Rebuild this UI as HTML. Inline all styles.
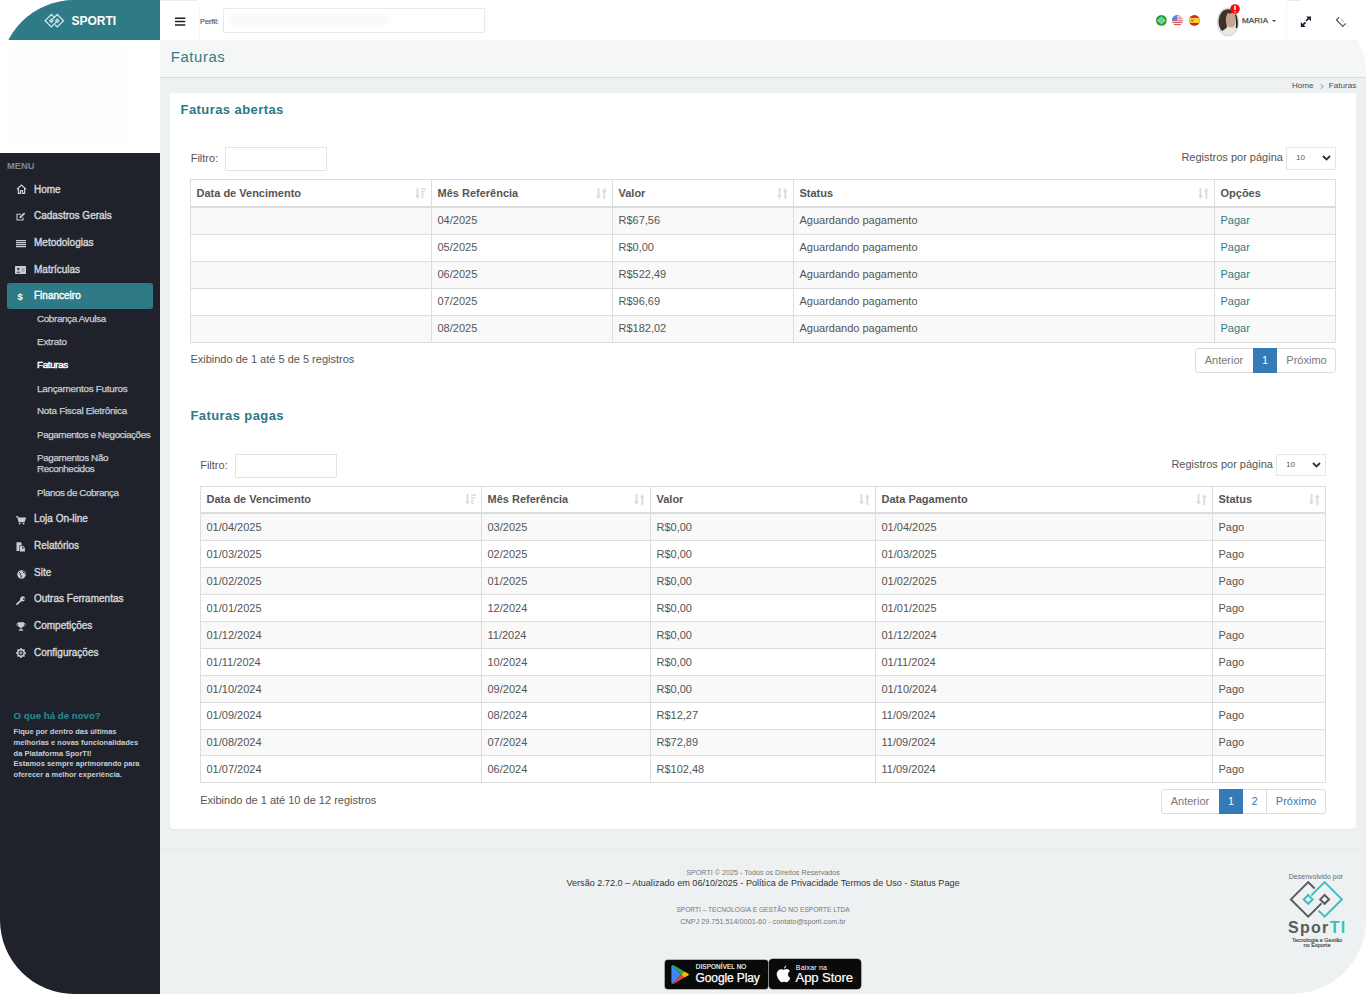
<!DOCTYPE html>
<html><head><meta charset="utf-8"><style>
*{margin:0;padding:0;box-sizing:border-box}
html,body{width:1366px;height:994px;overflow:hidden;background:#fff;font-family:"Liberation Sans",sans-serif}
#page{position:absolute;left:0;top:0;width:1366px;height:994px;border-radius:74px;overflow:hidden;background:#fff}
.t{position:absolute;white-space:nowrap}
.r{position:absolute}
svg{position:absolute;overflow:visible}
</style></head><body><div id="page">
<div class="r" style="left:160px;top:40px;width:1206px;height:954px;background:#eef1f2;"></div>
<div class="r" style="left:0px;top:153px;width:160px;height:841px;background:#1f222a;"></div>
<div class="r" style="left:0px;top:0px;width:160px;height:40px;background:#2e7b87;"></div>
<div class="r" style="left:6px;top:42px;width:125px;height:104px;background:#fefefe;border-radius:12px"></div>
<div class="r" style="left:160px;top:40px;width:1206px;height:37px;background:#f5f6f6;"></div>
<div class="r" style="left:160px;top:77px;width:1206px;height:1px;background:#d8dde3;"></div>
<svg style="left:0px;top:0px" width="160" height="40" viewBox="0 0 160 40"><g transform="translate(41.2,10.1) scale(0.36)" fill="none" stroke="#dbe9eb" stroke-width="3.4"><path d="M34.6 18.5 L28.2 12.1 L10.9 29.4 L28.2 46.7 L41.5 33.4"/><path d="M44.6 25 L49 29.4 L44.6 33.8 L40.2 29.4 Z"/><path d="M38.5 40.6 L44.6 46.7 L61.9 29.4 L44.6 12.1 L31.3 25.4"/><path d="M28.2 25 L32.6 29.4 L28.2 33.8 L23.8 29.4 Z"/></g></svg>
<div class="t" style="left:71.5px;top:14.84px;font-size:12px;line-height:12px;color:#ffffff;font-weight:bold;">SPORTI</div>
<div class="t" style="left:7px;top:161.98px;font-size:9.3px;line-height:9.3px;color:#7f8797;font-weight:bold;">MENU</div>
<div class="r" style="left:7px;top:283px;width:146px;height:26px;background:#2e7b87;border-radius:3px"></div>
<div class="t" style="left:34px;top:185.30px;font-size:10px;line-height:10px;color:#d2d5db;font-weight:normal;-webkit-text-stroke:0.4px #d2d5db">Home</div>
<div class="t" style="left:34px;top:210.90px;font-size:10px;line-height:10px;color:#d2d5db;font-weight:normal;-webkit-text-stroke:0.4px #d2d5db">Cadastros Gerais</div>
<div class="t" style="left:34px;top:238.00px;font-size:10px;line-height:10px;color:#d2d5db;font-weight:normal;-webkit-text-stroke:0.4px #d2d5db">Metodologias</div>
<div class="t" style="left:34px;top:265.00px;font-size:10px;line-height:10px;color:#d2d5db;font-weight:normal;-webkit-text-stroke:0.4px #d2d5db">Matrículas</div>
<div class="t" style="left:34px;top:291.00px;font-size:10px;line-height:10px;color:#ffffff;font-weight:normal;-webkit-text-stroke:0.4px #ffffff">Financeiro</div>
<div class="t" style="left:37px;top:314.48px;font-size:9.9px;line-height:9.9px;color:#c8ccd3;font-weight:normal;letter-spacing:-0.38px;-webkit-text-stroke:0.25px #c8ccd3">Cobrança Avulsa</div>
<div class="t" style="left:37px;top:337.18px;font-size:9.9px;line-height:9.9px;color:#c8ccd3;font-weight:normal;letter-spacing:-0.21px;-webkit-text-stroke:0.25px #c8ccd3">Extrato</div>
<div class="t" style="left:37px;top:360.08px;font-size:9.9px;line-height:9.9px;color:#ffffff;font-weight:normal;letter-spacing:-0.37px;-webkit-text-stroke:0.45px #fff">Faturas</div>
<div class="t" style="left:37px;top:383.58px;font-size:9.9px;line-height:9.9px;color:#c8ccd3;font-weight:normal;letter-spacing:-0.265px;-webkit-text-stroke:0.25px #c8ccd3">Lançamentos Futuros</div>
<div class="t" style="left:37px;top:406.48px;font-size:9.9px;line-height:9.9px;color:#c8ccd3;font-weight:normal;letter-spacing:-0.28px;-webkit-text-stroke:0.25px #c8ccd3">Nota Fiscal Eletrônica</div>
<div class="t" style="left:37px;top:429.68px;font-size:9.9px;line-height:9.9px;color:#c8ccd3;font-weight:normal;letter-spacing:-0.43px;-webkit-text-stroke:0.25px #c8ccd3">Pagamentos e Negociações</div>
<div class="t" style="left:37px;top:452.68px;font-size:9.9px;line-height:9.9px;color:#c8ccd3;font-weight:normal;letter-spacing:-0.37px;-webkit-text-stroke:0.25px #c8ccd3">Pagamentos Não</div>
<div class="t" style="left:37px;top:464.48px;font-size:9.9px;line-height:9.9px;color:#c8ccd3;font-weight:normal;letter-spacing:-0.45px;-webkit-text-stroke:0.25px #c8ccd3">Reconhecidos</div>
<div class="t" style="left:37px;top:487.68px;font-size:9.9px;line-height:9.9px;color:#c8ccd3;font-weight:normal;letter-spacing:-0.44px;-webkit-text-stroke:0.25px #c8ccd3">Planos de Cobrança</div>
<div class="t" style="left:34px;top:513.90px;font-size:10px;line-height:10px;color:#d2d5db;font-weight:normal;-webkit-text-stroke:0.4px #d2d5db">Loja On-line</div>
<div class="t" style="left:34px;top:540.80px;font-size:10px;line-height:10px;color:#d2d5db;font-weight:normal;-webkit-text-stroke:0.4px #d2d5db">Relatórios</div>
<div class="t" style="left:34px;top:567.90px;font-size:10px;line-height:10px;color:#d2d5db;font-weight:normal;-webkit-text-stroke:0.4px #d2d5db">Site</div>
<div class="t" style="left:34px;top:594.40px;font-size:10px;line-height:10px;color:#d2d5db;font-weight:normal;-webkit-text-stroke:0.4px #d2d5db">Outras Ferramentas</div>
<div class="t" style="left:34px;top:621.00px;font-size:10px;line-height:10px;color:#d2d5db;font-weight:normal;-webkit-text-stroke:0.4px #d2d5db">Competições</div>
<div class="t" style="left:34px;top:648.00px;font-size:10px;line-height:10px;color:#d2d5db;font-weight:normal;-webkit-text-stroke:0.4px #d2d5db">Configurações</div>
<svg style="left:15.5px;top:184px" width="11" height="10" viewBox="0 0 11 10"><path d="M1 5.2 L5.5 1 L10 5.2 M2.4 4 V9.4 H4.5 V6.6 H6.5 V9.4 H8.6 V4" fill="none" stroke="#c9cdd5" stroke-width="1.2"/></svg>
<svg style="left:15.5px;top:212px" width="10" height="9" viewBox="0 0 10 9"><path d="M5 2.3 H1 V8 H7 V5.5" fill="none" stroke="#c9cdd5" stroke-width="1.1"/><path d="M3.3 6.3 L3.8 4.6 L8 0.6 L9.2 1.8 L5 6 Z" fill="#c9cdd5"/></svg>
<svg style="left:15.5px;top:240px" width="10" height="8" viewBox="0 0 10 8"><path d="M0 0.6 H10 M0 2.6 H10 M0 4.6 H10 M0 6.6 H10" stroke="#c9cdd5" stroke-width="1.1"/></svg>
<svg style="left:15px;top:266px" width="11" height="8" viewBox="0 0 11 8"><rect x="0" y="0" width="11" height="8" rx="0.8" fill="#c9cdd5"/><circle cx="3.3" cy="3" r="1.2" fill="#3a3d45"/><path d="M1.4 6.8 Q3.3 4.3 5.2 6.8 Z" fill="#3a3d45"/><path d="M6.5 3 H9.5 M6.5 5 H9.5" stroke="#7b7f88" stroke-width="0.9"/></svg>
<div class="t" style="left:17.5px;top:292.42px;font-size:9.5px;line-height:9.5px;color:#ffffff;font-weight:bold;">$</div>
<svg style="left:16px;top:516px" width="10" height="9" viewBox="0 0 10 9"><path d="M0 0.8 H1.8 L3 5.6 H8.2 L9.4 2 H2.4" fill="#c9cdd5" stroke="#c9cdd5" stroke-width="1.1"/><circle cx="3.6" cy="7.6" r="0.9" fill="#c9cdd5"/><circle cx="7.6" cy="7.6" r="0.9" fill="#c9cdd5"/></svg>
<svg style="left:16px;top:542px" width="10" height="10" viewBox="0 0 10 10"><path d="M0.5 0.3 H4.6 L5.6 1.3 V3.3 H3.3 V9 H0.5 Z" fill="#c9cdd5"/><path d="M3.8 3.8 H7 L9 5.8 V9.6 H3.8 Z" fill="#c9cdd5"/><path d="M6.6 4.2 V6.2 H8.6" fill="none" stroke="#1f222a" stroke-width="0.8"/></svg>
<svg style="left:16.5px;top:570px" width="9" height="9" viewBox="0 0 9 9"><circle cx="4.5" cy="4.5" r="4.2" fill="#c9cdd5"/><path d="M2.3 2.2 Q3.8 3.2 3.3 4.6 Q4.6 5.4 4.2 7.8 M5.8 1.2 Q6.3 3 8 3.5" fill="none" stroke="#1f222a" stroke-width="1"/></svg>
<svg style="left:16px;top:596px" width="10" height="9" viewBox="0 0 10 9"><path d="M1 8.2 L5.2 4.2" stroke="#c9cdd5" stroke-width="1.8" stroke-linecap="round"/><path d="M4.7 4.6 A2.6 2.6 0 1 1 9.2 2.2 L7.3 2.2 L6.8 2.9 L7.3 4.1 L9.2 3.3 A2.6 2.6 0 0 1 4.7 4.6 Z" fill="#c9cdd5"/></svg>
<svg style="left:16px;top:622px" width="10" height="9" viewBox="0 0 10 9"><path d="M2 0.3 H8 V2.6 Q8 5.5 5 5.8 Q2 5.5 2 2.6 Z" fill="#c9cdd5"/><path d="M2 1.3 Q0.5 1.3 0.8 2.7 Q1.2 3.9 2.4 4.1 M8 1.3 Q9.5 1.3 9.2 2.7 Q8.8 3.9 7.6 4.1" fill="none" stroke="#c9cdd5" stroke-width="0.8"/><path d="M4.5 5.5 V7.5 H2.8 V8.7 H7.2 V7.5 H5.5 V5.5 Z" fill="#c9cdd5"/></svg>
<svg style="left:16px;top:647.5px" width="10" height="10" viewBox="0 0 10 10"><g fill="none" stroke="#c9cdd5"><circle cx="5" cy="5" r="3.2" stroke-width="1.4"/><circle cx="5" cy="5" r="1.1" stroke-width="0.9"/></g><g stroke="#c9cdd5" stroke-width="1.5"><path d="M5 0 V1.8 M5 8.2 V10 M0 5 H1.8 M8.2 5 H10 M1.5 1.5 L2.7 2.7 M7.3 7.3 L8.5 8.5 M1.5 8.5 L2.7 7.3 M7.3 2.7 L8.5 1.5"/></g></svg>
<div class="t" style="left:13.6px;top:711.45px;font-size:9.7px;line-height:9.7px;color:#2e8b96;font-weight:bold;">O que há de novo?</div>
<div class="t" style="left:13.6px;top:727.77px;font-size:7.5px;line-height:7.5px;color:#c9cdd4;font-weight:bold;">Fique por dentro das últimas</div>
<div class="t" style="left:13.6px;top:738.77px;font-size:7.5px;line-height:7.5px;color:#c9cdd4;font-weight:bold;">melhorias e novas funcionalidades</div>
<div class="t" style="left:13.6px;top:749.57px;font-size:7.5px;line-height:7.5px;color:#c9cdd4;font-weight:bold;">da Plataforma SporTI!</div>
<div class="t" style="left:13.6px;top:759.67px;font-size:7.5px;line-height:7.5px;color:#c9cdd4;font-weight:bold;">Estamos sempre aprimorando para</div>
<div class="t" style="left:13.6px;top:770.67px;font-size:7.5px;line-height:7.5px;color:#c9cdd4;font-weight:bold;">oferecer a melhor experiência.</div>
<svg style="left:174.8px;top:17px" width="11" height="9" viewBox="0 0 11 9"><path d="M0 1.2 H10.3 M0 4.6 H10.3 M0 8 H10.3" stroke="#1c1f29" stroke-width="1.5"/></svg>
<div class="t" style="left:200px;top:17.86px;font-size:7.4px;line-height:7.4px;color:#555;font-weight:normal;-webkit-text-stroke:0.2px #555">Perfil:</div>
<div class="r" style="left:199px;top:2px;width:1px;height:38px;background:#f6f6f6;"></div>
<div class="r" style="left:160px;top:0px;width:38px;height:1px;background:#ececec;border-radius:0 2px 0 0"></div>
<div class="r" style="left:223px;top:8px;width:262px;height:25px;background:#fff;border:1px solid #e6e9ed;border-radius:1px"></div>
<div class="r" style="left:228px;top:14px;width:160px;height:11px;background:rgba(238,240,242,0.45);filter:blur(2px);border-radius:5px"></div>
<svg style="left:1156px;top:15px" width="11" height="11" viewBox="0 0 11 11"><circle cx="5.4" cy="5.4" r="5.4" fill="#2a9a3c"/><path d="M5.4 1.6 L9.8 5.4 L5.4 9.2 L1 5.4 Z" fill="#e6d72e"/><circle cx="5.4" cy="5.4" r="2.4" fill="#3bd2f0"/></svg>
<svg style="left:1172px;top:15px" width="11" height="11" viewBox="0 0 11 11"><defs><clipPath id="cu"><circle cx="5.4" cy="5.4" r="5.4"/></clipPath></defs><g clip-path="url(#cu)"><rect width="11" height="11" fill="#f3eeee"/><path d="M0 0.8 H11 M0 3 H11 M0 5.2 H11 M0 7.4 H11 M0 9.6 H11" stroke="#df5a66" stroke-width="1.1"/><rect width="5" height="5.6" fill="#5c85cf"/></g></svg>
<svg style="left:1188.5px;top:15px" width="11" height="11" viewBox="0 0 11 11"><defs><clipPath id="ce"><circle cx="5.4" cy="5.4" r="5.4"/></clipPath></defs><g clip-path="url(#ce)"><rect width="11" height="11" fill="#e0192e"/><rect y="2.9" width="11" height="5" fill="#f5d52a"/><circle cx="3.3" cy="5.4" r="1.2" fill="#e06040"/></g></svg>
<svg style="left:1217px;top:7.8px" width="22" height="28" viewBox="0 0 22 28"><defs><clipPath id="av"><ellipse cx="11" cy="14" rx="10.8" ry="14"/></clipPath></defs><g clip-path="url(#av)"><rect width="22" height="28" fill="#e6e1d7"/><path d="M2.5 8 Q5 1.5 11 1.2 Q15 1.2 17 3 Q12 3.5 10 8 Q9 14 10 19 Q8 23 5 23 Q1.5 19 1.5 13 Z" fill="#40302a"/><ellipse cx="14" cy="11.5" rx="5.2" ry="8" fill="#c6a491"/><path d="M11 2 Q16 1.5 19.5 5 Q15 4 12 6 Z" fill="#3b2b25"/><path d="M3 28 Q5 20.5 12 19.5 Q18 20 21 24 L21 28 Z" fill="#ece9e1"/><path d="M19 6 Q21.5 12 20.5 20 L18.8 20 Q19.8 12 18 7 Z" fill="#1e1917"/></g><ellipse cx="11" cy="14" rx="10.8" ry="14" fill="none" stroke="#9ed6d6" stroke-width="0.6"/></svg>
<svg style="left:1230.3px;top:3.8px" width="10" height="10" viewBox="0 0 10 10"><circle cx="5" cy="5" r="4.8" fill="#fa0a0f"/><rect x="4.2" y="1.8" width="1.6" height="4.2" rx="0.5" fill="#fff"/><rect x="4.3" y="7" width="1.4" height="1.3" fill="#f3d0d0"/></svg>
<div class="t" style="left:1242px;top:17.48px;font-size:8.1px;line-height:8.1px;color:#4a4a4a;font-weight:normal;letter-spacing:0.1px;-webkit-text-stroke:0.25px #4a4a4a">MARIA</div>
<svg style="left:1272px;top:20px" width="4" height="2" viewBox="0 0 4 2"><path d="M0 0 H4 L2 2 Z" fill="#444"/></svg>
<div class="r" style="left:1286px;top:0px;width:1px;height:40px;background:#f8f8f8;"></div>
<div class="r" style="left:1325px;top:6px;width:1px;height:34px;background:#fbfbfb;"></div>
<div class="r" style="left:1287px;top:0px;width:14px;height:1px;background:#e9e9e9;"></div>
<svg style="left:1295px;top:10px" width="60" height="22" viewBox="0 0 60 22"><g stroke="#1c2130" stroke-width="1.7"><path d="M11 11 L13.6 8.4"/><path d="M10.5 12.3 L7.9 14.9"/></g><path d="M16 6.4 V11.2 L11.2 6.4 Z" fill="#1c2130"/><path d="M5.8 12 V16.9 H10.7 Z" fill="#1c2130"/><path d="M44 7.3 L41.5 10 L47.8 16.4 L50.6 13.4" fill="none" stroke="#5a5a5a" stroke-width="1.3"/><path d="M46 9 L48.6 11.8" stroke="#4fc6cc" stroke-width="1.1"/><path d="M51 14 L53.8 16.8" stroke="#8fdde0" stroke-width="0.8"/></svg>
<div class="t" style="left:170.7px;top:50.13px;font-size:14.9px;line-height:14.9px;color:#2f7e8a;font-weight:normal;letter-spacing:0.6px">Faturas</div>
<div class="t" style="right:52.40000000000009px;top:82.18px;font-size:8.1px;line-height:8.1px;color:#4a4a55;font-weight:normal;">Home</div>
<svg style="left:1319.5px;top:83.5px" width="4" height="5" viewBox="0 0 4 5"><path d="M0.5 0.3 L3.3 2.5 L0.5 4.7" fill="none" stroke="#777" stroke-width="0.8"/></svg>
<div class="t" style="right:9.799999999999955px;top:82.18px;font-size:8.1px;line-height:8.1px;color:#4a4a55;font-weight:normal;">Faturas</div>
<div class="r" style="left:170px;top:93px;width:1186px;height:736px;background:#fff;border-radius:3px;box-shadow:0 1px 1px rgba(0,0,0,0.04)"></div>
<div class="t" style="left:180.6px;top:102.71px;font-size:13px;line-height:13px;color:#2b7986;font-weight:bold;letter-spacing:0.42px">Faturas abertas</div>
<div class="t" style="left:190.7px;top:152.57px;font-size:11px;line-height:11px;color:#555;font-weight:normal;">Filtro:</div>
<div class="r" style="left:225px;top:147px;width:102px;height:24px;background:#fff;border:1px solid #dfe4ea"></div>
<div class="t" style="right:83.09999999999991px;top:152.37px;font-size:11px;line-height:11px;color:#555;font-weight:normal;">Registros por página</div>
<div class="r" style="left:1286px;top:147px;width:50px;height:23px;background:#fff;border:1px solid #e3e7ec"></div>
<div class="t" style="left:1296px;top:154.36px;font-size:8px;line-height:8px;color:#555;font-weight:normal;">10</div>
<svg style="left:1322px;top:155px" width="9" height="6" viewBox="0 0 9 6"><path d="M1 1 L4.5 4.5 L8 1" fill="none" stroke="#333" stroke-width="1.8"/></svg>
<div class="r" style="left:191px;top:208px;width:1144px;height:26px;background:#f9f9f9;"></div>
<div class="r" style="left:191px;top:262px;width:1144px;height:26px;background:#f9f9f9;"></div>
<div class="r" style="left:191px;top:316px;width:1144px;height:26px;background:#f9f9f9;"></div>
<div class="r" style="left:190px;top:179px;width:1146px;height:1px;background:#dddddd;"></div>
<div class="r" style="left:190px;top:206px;width:1146px;height:2px;background:#dddddd;"></div>
<div class="r" style="left:190px;top:234px;width:1146px;height:1px;background:#dddddd;"></div>
<div class="r" style="left:190px;top:261px;width:1146px;height:1px;background:#dddddd;"></div>
<div class="r" style="left:190px;top:288px;width:1146px;height:1px;background:#dddddd;"></div>
<div class="r" style="left:190px;top:315px;width:1146px;height:1px;background:#dddddd;"></div>
<div class="r" style="left:190px;top:342px;width:1146px;height:1px;background:#dddddd;"></div>
<div class="r" style="left:190px;top:179px;width:1px;height:164px;background:#dddddd;"></div>
<div class="r" style="left:431px;top:179px;width:1px;height:164px;background:#dddddd;"></div>
<div class="r" style="left:612px;top:179px;width:1px;height:164px;background:#dddddd;"></div>
<div class="r" style="left:793px;top:179px;width:1px;height:164px;background:#dddddd;"></div>
<div class="r" style="left:1214px;top:179px;width:1px;height:164px;background:#dddddd;"></div>
<div class="r" style="left:1335px;top:179px;width:1px;height:164px;background:#dddddd;"></div>
<div class="t" style="left:196.5px;top:187.87px;font-size:11px;line-height:11px;color:#555;font-weight:bold;">Data de Vencimento</div>
<svg style="left:415px;top:188px" width="11" height="11" viewBox="0 0 11 11"><path d="M2.5 0 V8" stroke="#dcdcdc" stroke-width="2"/><path d="M0 7.3 H5 L2.5 11 Z" fill="#dcdcdc"/><path d="M6 1 H11 M6 3.8 H10 M6 6.5 H9 M6 9 H8.5" stroke="#dcdcdc" stroke-width="1.6"/></svg>
<div class="t" style="left:437.5px;top:187.87px;font-size:11px;line-height:11px;color:#555;font-weight:bold;">Mês Referência</div>
<svg style="left:596px;top:188px" width="11" height="11" viewBox="0 0 11 11"><path d="M2.5 0 V8" stroke="#dcdcdc" stroke-width="2"/><path d="M0 7.3 H5 L2.5 11 Z" fill="#dcdcdc"/><path d="M8.3 3 V11" stroke="#dcdcdc" stroke-width="2"/><path d="M5.8 3.7 H10.8 L8.3 0 Z" fill="#dcdcdc"/></svg>
<div class="t" style="left:618.5px;top:187.87px;font-size:11px;line-height:11px;color:#555;font-weight:bold;">Valor</div>
<svg style="left:777px;top:188px" width="11" height="11" viewBox="0 0 11 11"><path d="M2.5 0 V8" stroke="#dcdcdc" stroke-width="2"/><path d="M0 7.3 H5 L2.5 11 Z" fill="#dcdcdc"/><path d="M8.3 3 V11" stroke="#dcdcdc" stroke-width="2"/><path d="M5.8 3.7 H10.8 L8.3 0 Z" fill="#dcdcdc"/></svg>
<div class="t" style="left:799.5px;top:187.87px;font-size:11px;line-height:11px;color:#555;font-weight:bold;">Status</div>
<svg style="left:1198px;top:188px" width="11" height="11" viewBox="0 0 11 11"><path d="M2.5 0 V8" stroke="#dcdcdc" stroke-width="2"/><path d="M0 7.3 H5 L2.5 11 Z" fill="#dcdcdc"/><path d="M8.3 3 V11" stroke="#dcdcdc" stroke-width="2"/><path d="M5.8 3.7 H10.8 L8.3 0 Z" fill="#dcdcdc"/></svg>
<div class="t" style="left:1220.5px;top:187.87px;font-size:11px;line-height:11px;color:#555;font-weight:bold;">Opções</div>
<div class="t" style="left:437.5px;top:215.07px;font-size:11px;line-height:11px;color:#555;font-weight:normal;">04/2025</div>
<div class="t" style="left:618.5px;top:215.07px;font-size:11px;line-height:11px;color:#555;font-weight:normal;">R$67,56</div>
<div class="t" style="left:799.5px;top:215.07px;font-size:11px;line-height:11px;color:#555;font-weight:normal;">Aguardando pagamento</div>
<div class="t" style="left:1220.5px;top:215.07px;font-size:11px;line-height:11px;color:#2e7b87;font-weight:normal;">Pagar</div>
<div class="t" style="left:437.5px;top:242.07px;font-size:11px;line-height:11px;color:#555;font-weight:normal;">05/2025</div>
<div class="t" style="left:618.5px;top:242.07px;font-size:11px;line-height:11px;color:#555;font-weight:normal;">R$0,00</div>
<div class="t" style="left:799.5px;top:242.07px;font-size:11px;line-height:11px;color:#555;font-weight:normal;">Aguardando pagamento</div>
<div class="t" style="left:1220.5px;top:242.07px;font-size:11px;line-height:11px;color:#2e7b87;font-weight:normal;">Pagar</div>
<div class="t" style="left:437.5px;top:269.07px;font-size:11px;line-height:11px;color:#555;font-weight:normal;">06/2025</div>
<div class="t" style="left:618.5px;top:269.07px;font-size:11px;line-height:11px;color:#555;font-weight:normal;">R$522,49</div>
<div class="t" style="left:799.5px;top:269.07px;font-size:11px;line-height:11px;color:#555;font-weight:normal;">Aguardando pagamento</div>
<div class="t" style="left:1220.5px;top:269.07px;font-size:11px;line-height:11px;color:#2e7b87;font-weight:normal;">Pagar</div>
<div class="t" style="left:437.5px;top:296.07px;font-size:11px;line-height:11px;color:#555;font-weight:normal;">07/2025</div>
<div class="t" style="left:618.5px;top:296.07px;font-size:11px;line-height:11px;color:#555;font-weight:normal;">R$96,69</div>
<div class="t" style="left:799.5px;top:296.07px;font-size:11px;line-height:11px;color:#555;font-weight:normal;">Aguardando pagamento</div>
<div class="t" style="left:1220.5px;top:296.07px;font-size:11px;line-height:11px;color:#2e7b87;font-weight:normal;">Pagar</div>
<div class="t" style="left:437.5px;top:323.07px;font-size:11px;line-height:11px;color:#555;font-weight:normal;">08/2025</div>
<div class="t" style="left:618.5px;top:323.07px;font-size:11px;line-height:11px;color:#555;font-weight:normal;">R$182,02</div>
<div class="t" style="left:799.5px;top:323.07px;font-size:11px;line-height:11px;color:#555;font-weight:normal;">Aguardando pagamento</div>
<div class="t" style="left:1220.5px;top:323.07px;font-size:11px;line-height:11px;color:#2e7b87;font-weight:normal;">Pagar</div>
<div class="t" style="left:190.4px;top:354.07px;font-size:11px;line-height:11px;color:#555;font-weight:normal;">Exibindo de 1 até 5 de 5 registros</div>
<div class="r" style="left:1195px;top:348px;width:141px;height:25px;border:1px solid #dddddd;border-radius:3px;background:#fff"></div>
<div class="t" style="left:1195px;top:348px;width:58px;height:25px;line-height:25px;text-align:center;font-size:11px;color:#777">Anterior</div>
<div class="r" style="left:1253px;top:348px;width:24px;height:25px;background:#337ab7;"></div>
<div class="t" style="left:1253px;top:348px;width:24px;height:25px;line-height:25px;text-align:center;font-size:11px;color:#fff">1</div>
<div class="t" style="left:1277px;top:348px;width:59px;height:25px;line-height:25px;text-align:center;font-size:11px;color:#777">Próximo</div>
<div class="t" style="left:190.4px;top:408.71px;font-size:13px;line-height:13px;color:#2b7986;font-weight:bold;letter-spacing:0.42px">Faturas pagas</div>
<div class="t" style="left:200.2px;top:460.07px;font-size:11px;line-height:11px;color:#555;font-weight:normal;">Filtro:</div>
<div class="r" style="left:235px;top:454px;width:102px;height:24px;background:#fff;border:1px solid #dfe4ea"></div>
<div class="t" style="right:93.09999999999991px;top:459.37px;font-size:11px;line-height:11px;color:#555;font-weight:normal;">Registros por página</div>
<div class="r" style="left:1276px;top:454px;width:50px;height:22px;background:#fff;border:1px solid #e3e7ec"></div>
<div class="t" style="left:1286px;top:461.36px;font-size:8px;line-height:8px;color:#555;font-weight:normal;">10</div>
<svg style="left:1312px;top:462px" width="9" height="6" viewBox="0 0 9 6"><path d="M1 1 L4.5 4.5 L8 1" fill="none" stroke="#333" stroke-width="1.8"/></svg>
<div class="r" style="left:201px;top:514px;width:1124px;height:26px;background:#f9f9f9;"></div>
<div class="r" style="left:201px;top:568px;width:1124px;height:26px;background:#f9f9f9;"></div>
<div class="r" style="left:201px;top:622px;width:1124px;height:26px;background:#f9f9f9;"></div>
<div class="r" style="left:201px;top:676px;width:1124px;height:26px;background:#f9f9f9;"></div>
<div class="r" style="left:201px;top:730px;width:1124px;height:25px;background:#f9f9f9;"></div>
<div class="r" style="left:200px;top:486px;width:1126px;height:1px;background:#dddddd;"></div>
<div class="r" style="left:200px;top:512px;width:1126px;height:2px;background:#dddddd;"></div>
<div class="r" style="left:200px;top:540px;width:1126px;height:1px;background:#dddddd;"></div>
<div class="r" style="left:200px;top:567px;width:1126px;height:1px;background:#dddddd;"></div>
<div class="r" style="left:200px;top:594px;width:1126px;height:1px;background:#dddddd;"></div>
<div class="r" style="left:200px;top:621px;width:1126px;height:1px;background:#dddddd;"></div>
<div class="r" style="left:200px;top:648px;width:1126px;height:1px;background:#dddddd;"></div>
<div class="r" style="left:200px;top:675px;width:1126px;height:1px;background:#dddddd;"></div>
<div class="r" style="left:200px;top:702px;width:1126px;height:1px;background:#dddddd;"></div>
<div class="r" style="left:200px;top:729px;width:1126px;height:1px;background:#dddddd;"></div>
<div class="r" style="left:200px;top:755px;width:1126px;height:1px;background:#dddddd;"></div>
<div class="r" style="left:200px;top:782px;width:1126px;height:1px;background:#dddddd;"></div>
<div class="r" style="left:200px;top:486px;width:1px;height:297px;background:#dddddd;"></div>
<div class="r" style="left:481px;top:486px;width:1px;height:297px;background:#dddddd;"></div>
<div class="r" style="left:650px;top:486px;width:1px;height:297px;background:#dddddd;"></div>
<div class="r" style="left:875px;top:486px;width:1px;height:297px;background:#dddddd;"></div>
<div class="r" style="left:1212px;top:486px;width:1px;height:297px;background:#dddddd;"></div>
<div class="r" style="left:1325px;top:486px;width:1px;height:297px;background:#dddddd;"></div>
<div class="t" style="left:206.5px;top:493.87px;font-size:11px;line-height:11px;color:#555;font-weight:bold;">Data de Vencimento</div>
<svg style="left:465px;top:494px" width="11" height="11" viewBox="0 0 11 11"><path d="M2.5 0 V8" stroke="#dcdcdc" stroke-width="2"/><path d="M0 7.3 H5 L2.5 11 Z" fill="#dcdcdc"/><path d="M6 1 H11 M6 3.8 H10 M6 6.5 H9 M6 9 H8.5" stroke="#dcdcdc" stroke-width="1.6"/></svg>
<div class="t" style="left:487.5px;top:493.87px;font-size:11px;line-height:11px;color:#555;font-weight:bold;">Mês Referência</div>
<svg style="left:634px;top:494px" width="11" height="11" viewBox="0 0 11 11"><path d="M2.5 0 V8" stroke="#dcdcdc" stroke-width="2"/><path d="M0 7.3 H5 L2.5 11 Z" fill="#dcdcdc"/><path d="M8.3 3 V11" stroke="#dcdcdc" stroke-width="2"/><path d="M5.8 3.7 H10.8 L8.3 0 Z" fill="#dcdcdc"/></svg>
<div class="t" style="left:656.5px;top:493.87px;font-size:11px;line-height:11px;color:#555;font-weight:bold;">Valor</div>
<svg style="left:859px;top:494px" width="11" height="11" viewBox="0 0 11 11"><path d="M2.5 0 V8" stroke="#dcdcdc" stroke-width="2"/><path d="M0 7.3 H5 L2.5 11 Z" fill="#dcdcdc"/><path d="M8.3 3 V11" stroke="#dcdcdc" stroke-width="2"/><path d="M5.8 3.7 H10.8 L8.3 0 Z" fill="#dcdcdc"/></svg>
<div class="t" style="left:881.5px;top:493.87px;font-size:11px;line-height:11px;color:#555;font-weight:bold;">Data Pagamento</div>
<svg style="left:1196px;top:494px" width="11" height="11" viewBox="0 0 11 11"><path d="M2.5 0 V8" stroke="#dcdcdc" stroke-width="2"/><path d="M0 7.3 H5 L2.5 11 Z" fill="#dcdcdc"/><path d="M8.3 3 V11" stroke="#dcdcdc" stroke-width="2"/><path d="M5.8 3.7 H10.8 L8.3 0 Z" fill="#dcdcdc"/></svg>
<div class="t" style="left:1218.5px;top:493.87px;font-size:11px;line-height:11px;color:#555;font-weight:bold;">Status</div>
<svg style="left:1309px;top:494px" width="11" height="11" viewBox="0 0 11 11"><path d="M2.5 0 V8" stroke="#dcdcdc" stroke-width="2"/><path d="M0 7.3 H5 L2.5 11 Z" fill="#dcdcdc"/><path d="M8.3 3 V11" stroke="#dcdcdc" stroke-width="2"/><path d="M5.8 3.7 H10.8 L8.3 0 Z" fill="#dcdcdc"/></svg>
<div class="t" style="left:206.5px;top:522.17px;font-size:11px;line-height:11px;color:#555;font-weight:normal;">01/04/2025</div>
<div class="t" style="left:487.5px;top:522.17px;font-size:11px;line-height:11px;color:#555;font-weight:normal;">03/2025</div>
<div class="t" style="left:656.5px;top:522.17px;font-size:11px;line-height:11px;color:#555;font-weight:normal;">R$0,00</div>
<div class="t" style="left:881.5px;top:522.17px;font-size:11px;line-height:11px;color:#555;font-weight:normal;">01/04/2025</div>
<div class="t" style="left:1218.5px;top:522.17px;font-size:11px;line-height:11px;color:#555;font-weight:normal;">Pago</div>
<div class="t" style="left:206.5px;top:549.06px;font-size:11px;line-height:11px;color:#555;font-weight:normal;">01/03/2025</div>
<div class="t" style="left:487.5px;top:549.06px;font-size:11px;line-height:11px;color:#555;font-weight:normal;">02/2025</div>
<div class="t" style="left:656.5px;top:549.06px;font-size:11px;line-height:11px;color:#555;font-weight:normal;">R$0,00</div>
<div class="t" style="left:881.5px;top:549.06px;font-size:11px;line-height:11px;color:#555;font-weight:normal;">01/03/2025</div>
<div class="t" style="left:1218.5px;top:549.06px;font-size:11px;line-height:11px;color:#555;font-weight:normal;">Pago</div>
<div class="t" style="left:206.5px;top:575.95px;font-size:11px;line-height:11px;color:#555;font-weight:normal;">01/02/2025</div>
<div class="t" style="left:487.5px;top:575.95px;font-size:11px;line-height:11px;color:#555;font-weight:normal;">01/2025</div>
<div class="t" style="left:656.5px;top:575.95px;font-size:11px;line-height:11px;color:#555;font-weight:normal;">R$0,00</div>
<div class="t" style="left:881.5px;top:575.95px;font-size:11px;line-height:11px;color:#555;font-weight:normal;">01/02/2025</div>
<div class="t" style="left:1218.5px;top:575.95px;font-size:11px;line-height:11px;color:#555;font-weight:normal;">Pago</div>
<div class="t" style="left:206.5px;top:602.84px;font-size:11px;line-height:11px;color:#555;font-weight:normal;">01/01/2025</div>
<div class="t" style="left:487.5px;top:602.84px;font-size:11px;line-height:11px;color:#555;font-weight:normal;">12/2024</div>
<div class="t" style="left:656.5px;top:602.84px;font-size:11px;line-height:11px;color:#555;font-weight:normal;">R$0,00</div>
<div class="t" style="left:881.5px;top:602.84px;font-size:11px;line-height:11px;color:#555;font-weight:normal;">01/01/2025</div>
<div class="t" style="left:1218.5px;top:602.84px;font-size:11px;line-height:11px;color:#555;font-weight:normal;">Pago</div>
<div class="t" style="left:206.5px;top:629.73px;font-size:11px;line-height:11px;color:#555;font-weight:normal;">01/12/2024</div>
<div class="t" style="left:487.5px;top:629.73px;font-size:11px;line-height:11px;color:#555;font-weight:normal;">11/2024</div>
<div class="t" style="left:656.5px;top:629.73px;font-size:11px;line-height:11px;color:#555;font-weight:normal;">R$0,00</div>
<div class="t" style="left:881.5px;top:629.73px;font-size:11px;line-height:11px;color:#555;font-weight:normal;">01/12/2024</div>
<div class="t" style="left:1218.5px;top:629.73px;font-size:11px;line-height:11px;color:#555;font-weight:normal;">Pago</div>
<div class="t" style="left:206.5px;top:656.62px;font-size:11px;line-height:11px;color:#555;font-weight:normal;">01/11/2024</div>
<div class="t" style="left:487.5px;top:656.62px;font-size:11px;line-height:11px;color:#555;font-weight:normal;">10/2024</div>
<div class="t" style="left:656.5px;top:656.62px;font-size:11px;line-height:11px;color:#555;font-weight:normal;">R$0,00</div>
<div class="t" style="left:881.5px;top:656.62px;font-size:11px;line-height:11px;color:#555;font-weight:normal;">01/11/2024</div>
<div class="t" style="left:1218.5px;top:656.62px;font-size:11px;line-height:11px;color:#555;font-weight:normal;">Pago</div>
<div class="t" style="left:206.5px;top:683.51px;font-size:11px;line-height:11px;color:#555;font-weight:normal;">01/10/2024</div>
<div class="t" style="left:487.5px;top:683.51px;font-size:11px;line-height:11px;color:#555;font-weight:normal;">09/2024</div>
<div class="t" style="left:656.5px;top:683.51px;font-size:11px;line-height:11px;color:#555;font-weight:normal;">R$0,00</div>
<div class="t" style="left:881.5px;top:683.51px;font-size:11px;line-height:11px;color:#555;font-weight:normal;">01/10/2024</div>
<div class="t" style="left:1218.5px;top:683.51px;font-size:11px;line-height:11px;color:#555;font-weight:normal;">Pago</div>
<div class="t" style="left:206.5px;top:710.40px;font-size:11px;line-height:11px;color:#555;font-weight:normal;">01/09/2024</div>
<div class="t" style="left:487.5px;top:710.40px;font-size:11px;line-height:11px;color:#555;font-weight:normal;">08/2024</div>
<div class="t" style="left:656.5px;top:710.40px;font-size:11px;line-height:11px;color:#555;font-weight:normal;">R$12,27</div>
<div class="t" style="left:881.5px;top:710.40px;font-size:11px;line-height:11px;color:#555;font-weight:normal;">11/09/2024</div>
<div class="t" style="left:1218.5px;top:710.40px;font-size:11px;line-height:11px;color:#555;font-weight:normal;">Pago</div>
<div class="t" style="left:206.5px;top:737.29px;font-size:11px;line-height:11px;color:#555;font-weight:normal;">01/08/2024</div>
<div class="t" style="left:487.5px;top:737.29px;font-size:11px;line-height:11px;color:#555;font-weight:normal;">07/2024</div>
<div class="t" style="left:656.5px;top:737.29px;font-size:11px;line-height:11px;color:#555;font-weight:normal;">R$72,89</div>
<div class="t" style="left:881.5px;top:737.29px;font-size:11px;line-height:11px;color:#555;font-weight:normal;">11/09/2024</div>
<div class="t" style="left:1218.5px;top:737.29px;font-size:11px;line-height:11px;color:#555;font-weight:normal;">Pago</div>
<div class="t" style="left:206.5px;top:764.18px;font-size:11px;line-height:11px;color:#555;font-weight:normal;">01/07/2024</div>
<div class="t" style="left:487.5px;top:764.18px;font-size:11px;line-height:11px;color:#555;font-weight:normal;">06/2024</div>
<div class="t" style="left:656.5px;top:764.18px;font-size:11px;line-height:11px;color:#555;font-weight:normal;">R$102,48</div>
<div class="t" style="left:881.5px;top:764.18px;font-size:11px;line-height:11px;color:#555;font-weight:normal;">11/09/2024</div>
<div class="t" style="left:1218.5px;top:764.18px;font-size:11px;line-height:11px;color:#555;font-weight:normal;">Pago</div>
<div class="t" style="left:200.2px;top:795.07px;font-size:11px;line-height:11px;color:#555;font-weight:normal;">Exibindo de 1 até 10 de 12 registros</div>
<div class="r" style="left:1161px;top:789px;width:165px;height:25px;border:1px solid #dddddd;border-radius:3px;background:#fff"></div>
<div class="t" style="left:1161px;top:789px;width:58px;height:25px;line-height:25px;text-align:center;font-size:11px;color:#777">Anterior</div>
<div class="r" style="left:1219px;top:789px;width:24px;height:25px;background:#337ab7;"></div>
<div class="t" style="left:1219px;top:789px;width:24px;height:25px;line-height:25px;text-align:center;font-size:11px;color:#fff">1</div>
<div class="t" style="left:1243px;top:789px;width:23px;height:25px;line-height:25px;text-align:center;font-size:11px;color:#337ab7">2</div>
<div class="r" style="left:1266px;top:789px;width:1px;height:25px;background:#dddddd;"></div>
<div class="t" style="left:1266px;top:789px;width:60px;height:25px;line-height:25px;text-align:center;font-size:11px;color:#337ab7">Próximo</div>
<div class="r" style="left:160px;top:849px;width:1206px;height:1px;background:#e7eaeb;"></div>
<div class="t" style="left:763px;transform:translateX(-50%);top:869.32px;font-size:7.2px;line-height:7.2px;color:#777;font-weight:normal;">SPORTI © 2025 - Todos os Direitos Reservados</div>
<div class="t" style="left:763px;transform:translateX(-50%);top:878.85px;font-size:9.1px;line-height:9.1px;color:#333;font-weight:normal;">Versão 2.72.0 – Atualizado em 06/10/2025 - Política de Privacidade Termos de Uso - Status Page</div>
<div class="t" style="left:763px;transform:translateX(-50%);top:906.82px;font-size:6.6px;line-height:6.6px;color:#777;font-weight:normal;">SPORTI – TECNOLOGIA E GESTÃO NO ESPORTE LTDA</div>
<div class="t" style="left:763px;transform:translateX(-50%);top:917.98px;font-size:7.25px;line-height:7.25px;color:#777;font-weight:normal;">CNPJ 29.751.514/0001-60 - contato@sporti.com.br</div>
<div class="r" style="left:664.5px;top:959.5px;width:103px;height:29.5px;background:#0a0a0a;border-radius:3px;box-shadow:0 0 0 0.6px #777"></div>
<svg style="left:671px;top:963.5px" width="19" height="21" viewBox="0 0 19 21"><path d="M1 1.2 Q0.4 1.6 0.4 2.5 V18.5 Q0.4 19.4 1 19.8 L10.2 10.5 Z" fill="#4285f4"/><path d="M1 1.2 Q1.8 0.6 2.8 1.2 L13.3 7.4 L10.2 10.5 Z" fill="#34a853"/><path d="M1 19.8 Q1.8 20.4 2.8 19.8 L13.3 13.6 L10.2 10.5 Z" fill="#ea4335"/><path d="M13.3 7.4 L17.5 9.8 Q18.4 10.5 17.5 11.2 L13.3 13.6 L10.2 10.5 Z" fill="#fbbc04"/></svg>
<div class="t" style="left:695.7px;top:963.77px;font-size:6.3px;line-height:6.3px;color:#fff;font-weight:normal;letter-spacing:0.15px;-webkit-text-stroke:0.15px #fff">DISPONÍVEL NO</div>
<div class="t" style="left:695.5px;top:971.74px;font-size:12px;line-height:12px;color:#fff;font-weight:normal;letter-spacing:-0.1px;-webkit-text-stroke:0.25px #fff">Google Play</div>
<div class="r" style="left:769px;top:959px;width:92px;height:30px;background:#0a0a0a;border-radius:4px;box-shadow:0 0 0 0.6px #777"></div>
<svg style="left:775.5px;top:965px" width="15" height="18" viewBox="0 0 15 18"><path d="M10.3 0.3 Q10.6 2.6 8 4 Q7.7 1.7 10.3 0.3 Z M7.6 4.7 Q9.2 4 10.8 4 Q12.8 4.2 13.9 5.9 Q11.6 7.4 12 10 Q12.4 12.1 14.3 12.9 Q13.3 15.6 11.8 16.8 Q10.8 17.6 9.5 17.1 Q8.1 16.5 7 17 Q5.4 17.6 4.4 16.6 Q1.6 13.9 0.9 10.8 Q0.3 7.2 2.4 5.3 Q4 4 5.7 4.3 Q6.7 4.6 7.6 4.7 Z" fill="#fff"/></svg>
<div class="t" style="left:795.8px;top:964.19px;font-size:7px;line-height:7px;color:#fff;font-weight:normal;letter-spacing:0.2px">Baixar na</div>
<div class="t" style="left:795.5px;top:970.93px;font-size:13.1px;line-height:13.1px;color:#fff;font-weight:normal;letter-spacing:-0.1px;-webkit-text-stroke:0.2px #fff">App Store</div>
<div class="t" style="left:1288.8px;top:872.59px;font-size:7.0px;line-height:7.0px;color:#666;font-weight:normal;">Desenvolvido por</div>
<svg style="left:1280px;top:870px" width="70" height="80" viewBox="0 0 70 80"><g fill="none" stroke-width="2" stroke-linejoin="miter"><path d="M34.6 18.5 L28.2 12.1 L10.9 29.4 L28.2 46.7 L41.5 33.4" stroke="#5a5a5a"/><path d="M44.6 25 L49 29.4 L44.6 33.8 L40.2 29.4 Z" stroke="#5a5a5a"/><path d="M38.5 40.6 L44.6 46.7 L61.9 29.4 L44.6 12.1 L31.3 25.4" stroke="#3bbdc4"/><path d="M28.2 25 L32.6 29.4 L28.2 33.8 L23.8 29.4 Z" stroke="#3bbdc4"/></g></svg>
<div class="t" style="left:1288px;top:919.5px;font-size:16px;line-height:16px;color:#5a5a5a;font-weight:bold;letter-spacing:1.3px">Spor<span style="color:#3bbdc4">TI</span></div>
<div class="t" style="left:1317px;transform:translateX(-50%);top:937.83px;font-size:5.5px;line-height:5.5px;color:#555;font-weight:normal;-webkit-text-stroke:0.2px #555">Tecnologia e Gestão</div>
<div class="t" style="left:1317px;transform:translateX(-50%);top:943.15px;font-size:5.6px;line-height:5.6px;color:#555;font-weight:normal;-webkit-text-stroke:0.2px #555">no Esporte</div>
</div></body></html>
